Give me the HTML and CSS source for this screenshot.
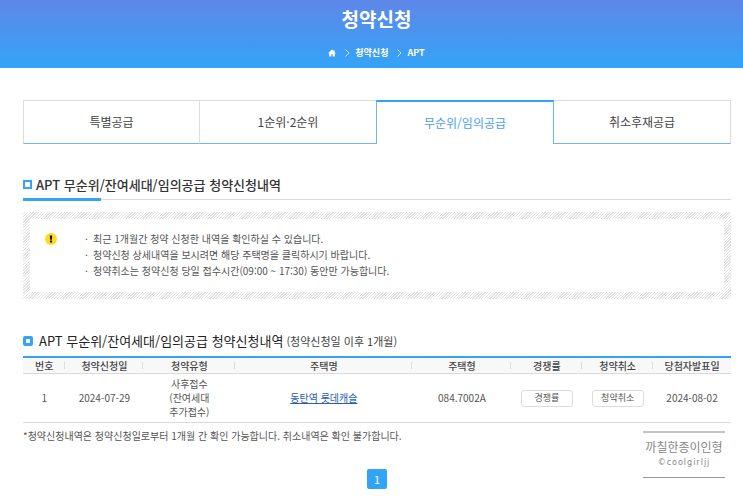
FILE: index.html
```html
<!DOCTYPE html>
<html lang="ko">
<head>
  <meta charset="UTF-8">
  <meta name="viewport" content="width=device-width, initial-scale=1.0">
  <title>청약신청</title>
  <link rel="stylesheet" href="styles.css">
</head>
<body>
  <header class="hero">
    <h1>청약신청</h1>
    <nav class="breadcrumb">
      <a href="#" aria-label="홈">
        <svg class="home" viewBox="0 0 16 16"><path d="M8 1 0 8.4h2.4V15h4.2v-4.6h2.8V15h4.2V8.4H16L13 5.6V2h-2v1.8z"/></svg>
      </a>
      <svg class="chevron" viewBox="0 0 5 8"><path d="M.5.5 4 4 .5 7.5"/></svg>
      <a href="#">청약신청</a>
      <svg class="chevron second" viewBox="0 0 5 8"><path d="M.5.5 4 4 .5 7.5"/></svg>
      <a href="#">APT</a>
    </nav>
  </header>

  <main class="content">
    <nav class="tabs">
      <a href="#">특별공급</a>
      <a href="#">1순위·2순위</a>
      <a href="#" class="active">무순위/임의공급</a>
      <a href="#">취소후재공급</a>
    </nav>

    <h2 class="section-title">APT 무순위/잔여세대/임의공급 청약신청내역</h2>

    <div class="notice">
      <div class="notice-body">
        <svg class="notice-icon" viewBox="0 0 12 12">
          <circle cx="6" cy="6" r="6" fill="#ffdc1e"/>
          <path d="M4.8 2.5h2.4L6.9 6.8H5.1z" fill="#111"/>
          <rect x="4.9" y="7.5" width="2.2" height="1.9" rx=".5" fill="#111"/>
        </svg>
        <ul>
          <li>최근 1개월간 청약 신청한 내역을 확인하실 수 있습니다.</li>
          <li>청약신청 상세내역을 보시려면 해당 주택명을 클릭하시기 바랍니다.</li>
          <li>청약취소는 청약신청 당일 접수시간(09:00 ~ 17:30) 동안만 가능합니다.</li>
        </ul>
      </div>
    </div>

    <h3 class="list-title">APT 무순위/잔여세대/임의공급 청약신청내역 <small>(청약신청일 이후 1개월)</small></h3>

    <table class="history">
      <colgroup>
        <col class="col-no">
        <col class="col-date">
        <col class="col-type">
        <col class="col-name">
        <col class="col-model">
        <col class="col-action">
        <col class="col-action">
        <col class="col-date">
      </colgroup>
      <thead>
        <tr>
          <th>번호</th>
          <th>청약신청일</th>
          <th>청약유형</th>
          <th>주택명</th>
          <th>주택형</th>
          <th>경쟁률</th>
          <th>청약취소</th>
          <th>당첨자발표일</th>
        </tr>
      </thead>
      <tbody>
        <tr>
          <td>1</td>
          <td>2024-07-29</td>
          <td>사후접수<br>(잔여세대<br>추가접수)</td>
          <td><a href="#">동탄역 롯데캐슬</a></td>
          <td>084.7002A</td>
          <td><button type="button">경쟁률</button></td>
          <td><button type="button">청약취소</button></td>
          <td>2024-08-02</td>
        </tr>
      </tbody>
    </table>

    <p class="footnote">*청약신청내역은 청약신청일로부터 1개월 간 확인 가능합니다. 취소내역은 확인 불가합니다.</p>

    <nav class="pager">
      <a href="#">1</a>
    </nav>

    <div class="signature">
      <strong>까칠한종이인형</strong>
      <span>©coolgirljj</span>
    </div>
  </main>
</body>
</html>
```

FILE: styles.css
```css
*,
*::before {
  box-sizing: border-box;
}

body {
  margin: 0;
  font-family: "Noto Sans CJK KR", sans-serif;
  font-size: 10px;
  line-height: 14px;
  color: #555;
  background-color: #fff;
}

a {
  color: inherit;
  text-decoration: none;
}

/* header */
.hero {
  height: 68px;
  padding: 7px 0 0 10px;
  text-align: center;
  color: #fff;
  background: linear-gradient(#5f87e8, #33a4f7);
}

.hero h1 {
  margin: 0;
  font-size: 19px;
  font-weight: 700;
  line-height: 24px;
}

.breadcrumb {
  display: flex;
  justify-content: center;
  align-items: center;
  gap: 5px;
  margin-top: 16px;
  font-size: 9px;
  font-weight: 700;
  line-height: 12px;
}

.breadcrumb a {
  display: flex;
}

.home {
  width: 8px;
  height: 8px;
  margin-right: 4px;
  fill: #fff;
}

.chevron {
  width: 5px;
  height: 8px;
  fill: none;
  stroke: #c8e4fd;
  stroke-width: 1;
}

.chevron.second {
  margin-left: 4px;
}

.content {
  position: relative;
  padding: 32px 12px 12px 23px;
}

/* tabs */
.tabs {
  display: grid;
  grid-template-columns: repeat(4, 1fr);
}

.tabs a {
  height: 44px;
  border: 1px solid #ddd;
  border-left-width: 0;
  border-bottom-color: #6bb8f2;
  font-size: 12px;
  line-height: 42px;
  text-align: center;
  color: #444;
}

.tabs a:first-child {
  border-left-width: 1px;
}

.tabs a.active {
  margin-left: -1px;
  border: 1px solid #6bb8f2;
  border-top: 2px solid #33a4f5;
  border-bottom: 0;
  background-color: #fff;
  color: #4a9df0;
}

/* section title */
.section-title {
  display: flex;
  align-items: center;
  gap: 4px;
  height: 57px;
  margin: 0;
  padding: 27px 0 3px;
  background:
    linear-gradient(#33a4f5, #33a4f5) left bottom / 78px 3px no-repeat,
    linear-gradient(#d8dadc, #d8dadc) left 0 bottom 1px / 100% 1px no-repeat;
  font-size: 13px;
  font-weight: 500;
  color: #333;
}

.section-title::before {
  content: "";
  width: 9px;
  height: 9px;
  border: 2px solid #33a4f5;
}

/* notice */
.notice {
  margin-top: 11px;
  padding: 7px;
  background: repeating-linear-gradient(135deg, #fff 0 1px, #e4e4e4 1px 2px);
}

.notice-body {
  display: flex;
  align-items: flex-start;
  padding: 12px 15px 13px;
  background-color: #fff;
}

.notice-icon {
  width: 12px;
  height: 12px;
  margin-top: 2px;
}

.notice ul {
  margin: 0;
  padding: 0 0 0 28px;
  list-style: none;
  line-height: 16px;
}

.notice li::before {
  content: "·";
  display: inline-block;
  width: 8px;
}

/* history list */
.list-title {
  display: flex;
  align-items: center;
  margin: 32px 0 5px;
  font-size: 13px;
  font-weight: 400;
  line-height: 20px;
  color: #222;
}

.list-title::before {
  content: "";
  width: 10px;
  height: 10px;
  margin-right: 6px;
  border: 3px solid #33a4f5;
  border-radius: 2px;
}

.list-title small {
  margin-left: 3px;
  font-size: 11px;
  color: #444;
}

.history {
  width: 100%;
  table-layout: fixed;
  border-collapse: separate;
  border-spacing: 0;
  border-top: 2px solid #33a4f5;
  text-align: center;
}

.col-no { width: 6%; }
.col-date { width: 11%; }
.col-type { width: 13%; }
.col-name { width: 25%; }
.col-model { width: 14%; }
.col-action { width: 10%; }

.history th {
  padding: 0;
  border-bottom: 1px solid #d8dadc;
  background: linear-gradient(#d5dfea, #d5dfea) right center / 1px 7px no-repeat #f8f8f8;
  font-weight: 500;
  line-height: 15px;
  color: #444;
}

.history th:last-child {
  background: #f8f8f8;
}

.history td {
  padding: 3px 0;
  border-bottom: 1px solid #d8dadc;
}

.history td a {
  text-decoration: underline;
  color: #2a5db5;
}

.history button {
  width: 52px;
  height: 17px;
  padding: 0;
  border: 1px solid #ddd;
  border-radius: 3px;
  background-color: #fff;
  font-family: inherit;
  font-size: 9px;
  line-height: 14px;
  color: #555;
  cursor: pointer;
}

.footnote {
  margin: 6px 0 0;
}

.pager {
  display: flex;
  justify-content: center;
  margin-top: 26px;
}

.pager a {
  width: 20px;
  height: 20px;
  border-radius: 2px;
  background-color: #33a4f5;
  font-size: 11px;
  line-height: 20px;
  text-align: center;
  color: #fff;
}

/* signature stamped over the lower right corner */
.signature {
  position: absolute;
  right: 18px;
  bottom: 23px;
  width: 82px;
  padding: 5px 0 7px;
  border-top: 2px solid #c4c4c4;
  border-bottom: 1px solid #999;
  text-align: center;
  color: #888;
}

.signature strong {
  display: block;
  font-size: 12px;
  font-weight: 400;
  line-height: 18px;
}

.signature span {
  display: block;
  font-family: "DejaVu Sans", sans-serif;
  font-size: 8px;
  letter-spacing: 1px;
  line-height: 14px;
}
```
